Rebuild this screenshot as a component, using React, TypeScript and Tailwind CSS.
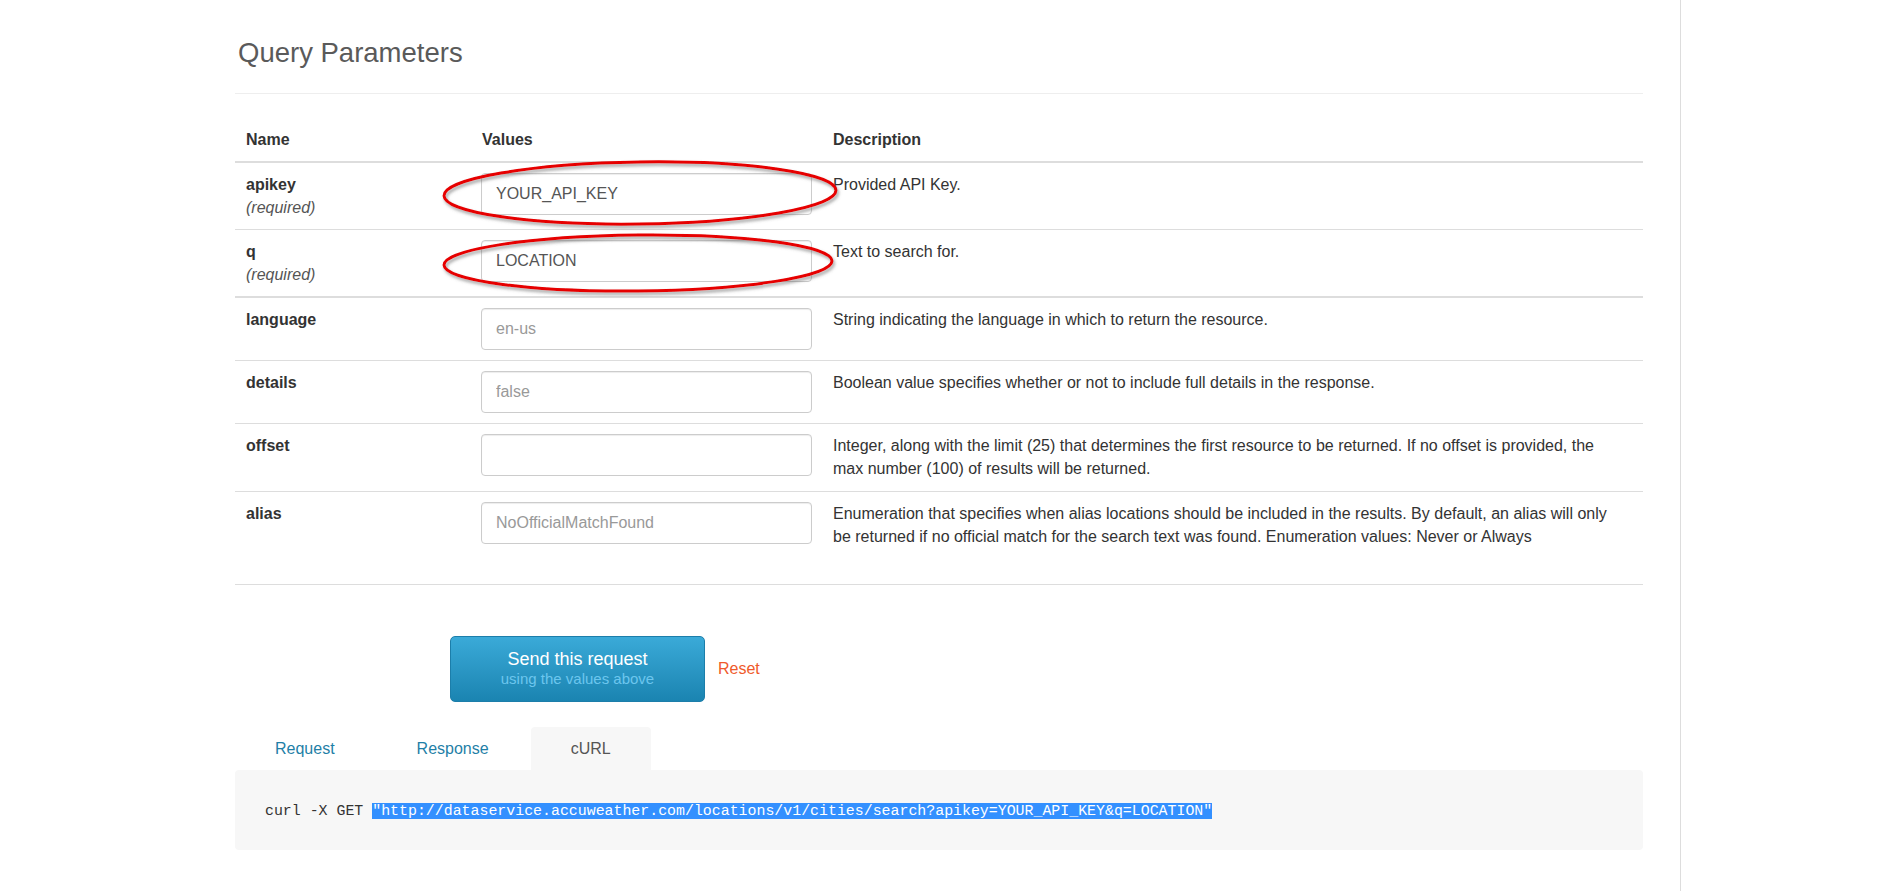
const rows = [
  {
    name: "apikey",
    required: true,
    value: "YOUR_API_KEY",
    placeholder: "",
    desc: "Provided API Key.",
  },
  {
    name: "q",
    required: true,
    value: "LOCATION",
    placeholder: "",
    desc: "Text to search for.",
  },
  {
    name: "language",
    required: false,
    value: "",
    placeholder: "en-us",
    desc: "String indicating the language in which to return the resource.",
  },
  {
    name: "details",
    required: false,
    value: "",
    placeholder: "false",
    desc: "Boolean value specifies whether or not to include full details in the response.",
  },
  {
    name: "offset",
    required: false,
    value: "",
    placeholder: "",
    desc: "Integer, along with the limit (25) that determines the first resource to be returned. If no offset is provided, the max number (100) of results will be returned.",
  },
  {
    name: "alias",
    required: false,
    value: "",
    placeholder: "NoOfficialMatchFound",
    desc: "Enumeration that specifies when alias locations should be included in the results. By default, an alias will only be returned if no official match for the search text was found. Enumeration values: Never or Always",
  },
];

// red hand-drawn marks around the two required inputs
const Ellipses = () => (
  <svg
    className="pointer-events-none absolute left-0 top-0"
    width="700"
    height="220"
    viewBox="0 0 700 220"
  >
    <defs>
      <filter id="sh" x="-10%" y="-40%" width="120%" height="180%">
        <feDropShadow dx="1.5" dy="2.5" stdDeviation="1.8" floodColor="#666" floodOpacity="0.6" />
      </filter>
    </defs>
    <g filter="url(#sh)" fill="none" stroke="#e60000" strokeWidth="3">
      <ellipse cx="405" cy="75" rx="196" ry="31" transform="rotate(-0.8 405 75)" />
      <ellipse cx="403" cy="145" rx="194" ry="28" transform="rotate(-0.6 403 145)" />
    </g>
  </svg>
);

const App = () => {
  return (
    <div className="flex min-h-screen bg-white font-['Liberation_Sans',Arial,sans-serif] text-[16px] text-[#333]">
      <div className="w-[1681px] shrink-0 border-r border-[#ddd] pl-[235px] pr-[37px]">
        <div className="mt-[38px] border-b border-[#eee] pb-[25px]">
          <h3 className="pl-[3px] text-[27.5px] leading-[30px] text-[#5a5a5a]">Query Parameters</h3>
        </div>

        <div className="relative mt-[24px]">
          <table className="w-full table-fixed border-collapse">
            <colgroup>
              <col className="w-[238px]" />
              <col className="w-[351px]" />
              <col />
            </colgroup>
            <thead>
              <tr className="border-b-2 border-[#ddd]">
                <th className="py-[10px] pl-[11px] pr-[9px] text-left font-bold leading-[23px]">Name</th>
                <th className="px-[9px] py-[10px] text-left font-bold leading-[23px]">Values</th>
                <th className="px-[9px] py-[10px] text-left font-bold leading-[23px]">Description</th>
              </tr>
            </thead>
            <tbody>
              {rows.map((row, i) => (
                <tr
                  key={row.name}
                  className={i === 1 ? "border-b-2 border-[#ddd]" : "border-b border-[#ddd]"}
                >
                  <td className="pb-[10px] pl-[11px] pr-[9px] pt-[10px] align-top leading-[23px]">
                    <div className="font-bold">{row.name}</div>
                    {row.required && <div className="italic text-[#555]">(required)</div>}
                  </td>
                  <td className="pb-[10px] pl-[8px] pt-[10px] align-top">
                    <input
                      readOnly
                      value={row.value}
                      placeholder={row.placeholder}
                      className="block h-[42px] w-[331px] rounded-[4px] border border-[#ccc] bg-white px-[14px] text-[16px] text-[#555] shadow-[inset_0_1px_1px_rgba(0,0,0,0.075)] outline-none placeholder:text-[#999]"
                    />
                  </td>
                  <td
                    className={`pl-[9px] pr-[20px] pt-[10px] align-top leading-[23px] ${
                      i === rows.length - 1 ? "pb-[36px]" : "pb-[11px]"
                    }`}
                  >
                    {row.desc}
                  </td>
                </tr>
              ))}
            </tbody>
          </table>
          <Ellipses />
        </div>

        <div className="mt-[51px] flex items-center">
          <button className="ml-[215px] flex h-[66px] w-[255px] flex-col items-center rounded-[5px] border border-[#1c7eaa] bg-gradient-to-b from-[#3aaad8] to-[#1a84b1] pt-[11px]">
            <span className="text-[18px] leading-[22px] text-white">Send this request</span>
            <span className="text-[15px] leading-[18px] text-[#6cc6ee]">using the values above</span>
          </button>
          <a className="ml-[13px] text-[16px] text-[#ef5a2b]">Reset</a>
        </div>

        <ul className="mt-[25px] flex">
          <li className="mr-[2px] rounded-t-[4px] px-[40px] py-[10px] leading-[23px] text-[#1f7fa7]">Request</li>
          <li className="mr-[2px] rounded-t-[4px] px-[40px] py-[10px] leading-[23px] text-[#1f7fa7]">Response</li>
          <li className="mr-[2px] rounded-t-[4px] bg-[#f7f7f7] px-[40px] py-[10px] leading-[23px] text-[#555]">cURL</li>
        </ul>
        <div className="rounded-[4px] bg-[#f7f7f7] pb-[27px] pl-[30px] pt-[30px] font-['Liberation_Mono',monospace] text-[14.9px] leading-[23px] text-[#333]">
          <span className="whitespace-pre">curl -X GET </span>
          <span className="whitespace-pre bg-[#3390ff] text-white">
            "http://dataservice.accuweather.com/locations/v1/cities/search?apikey=YOUR_API_KEY&amp;q=LOCATION"
          </span>
        </div>
      </div>
      <div className="flex-1" />
    </div>
  );
};

export default App;
